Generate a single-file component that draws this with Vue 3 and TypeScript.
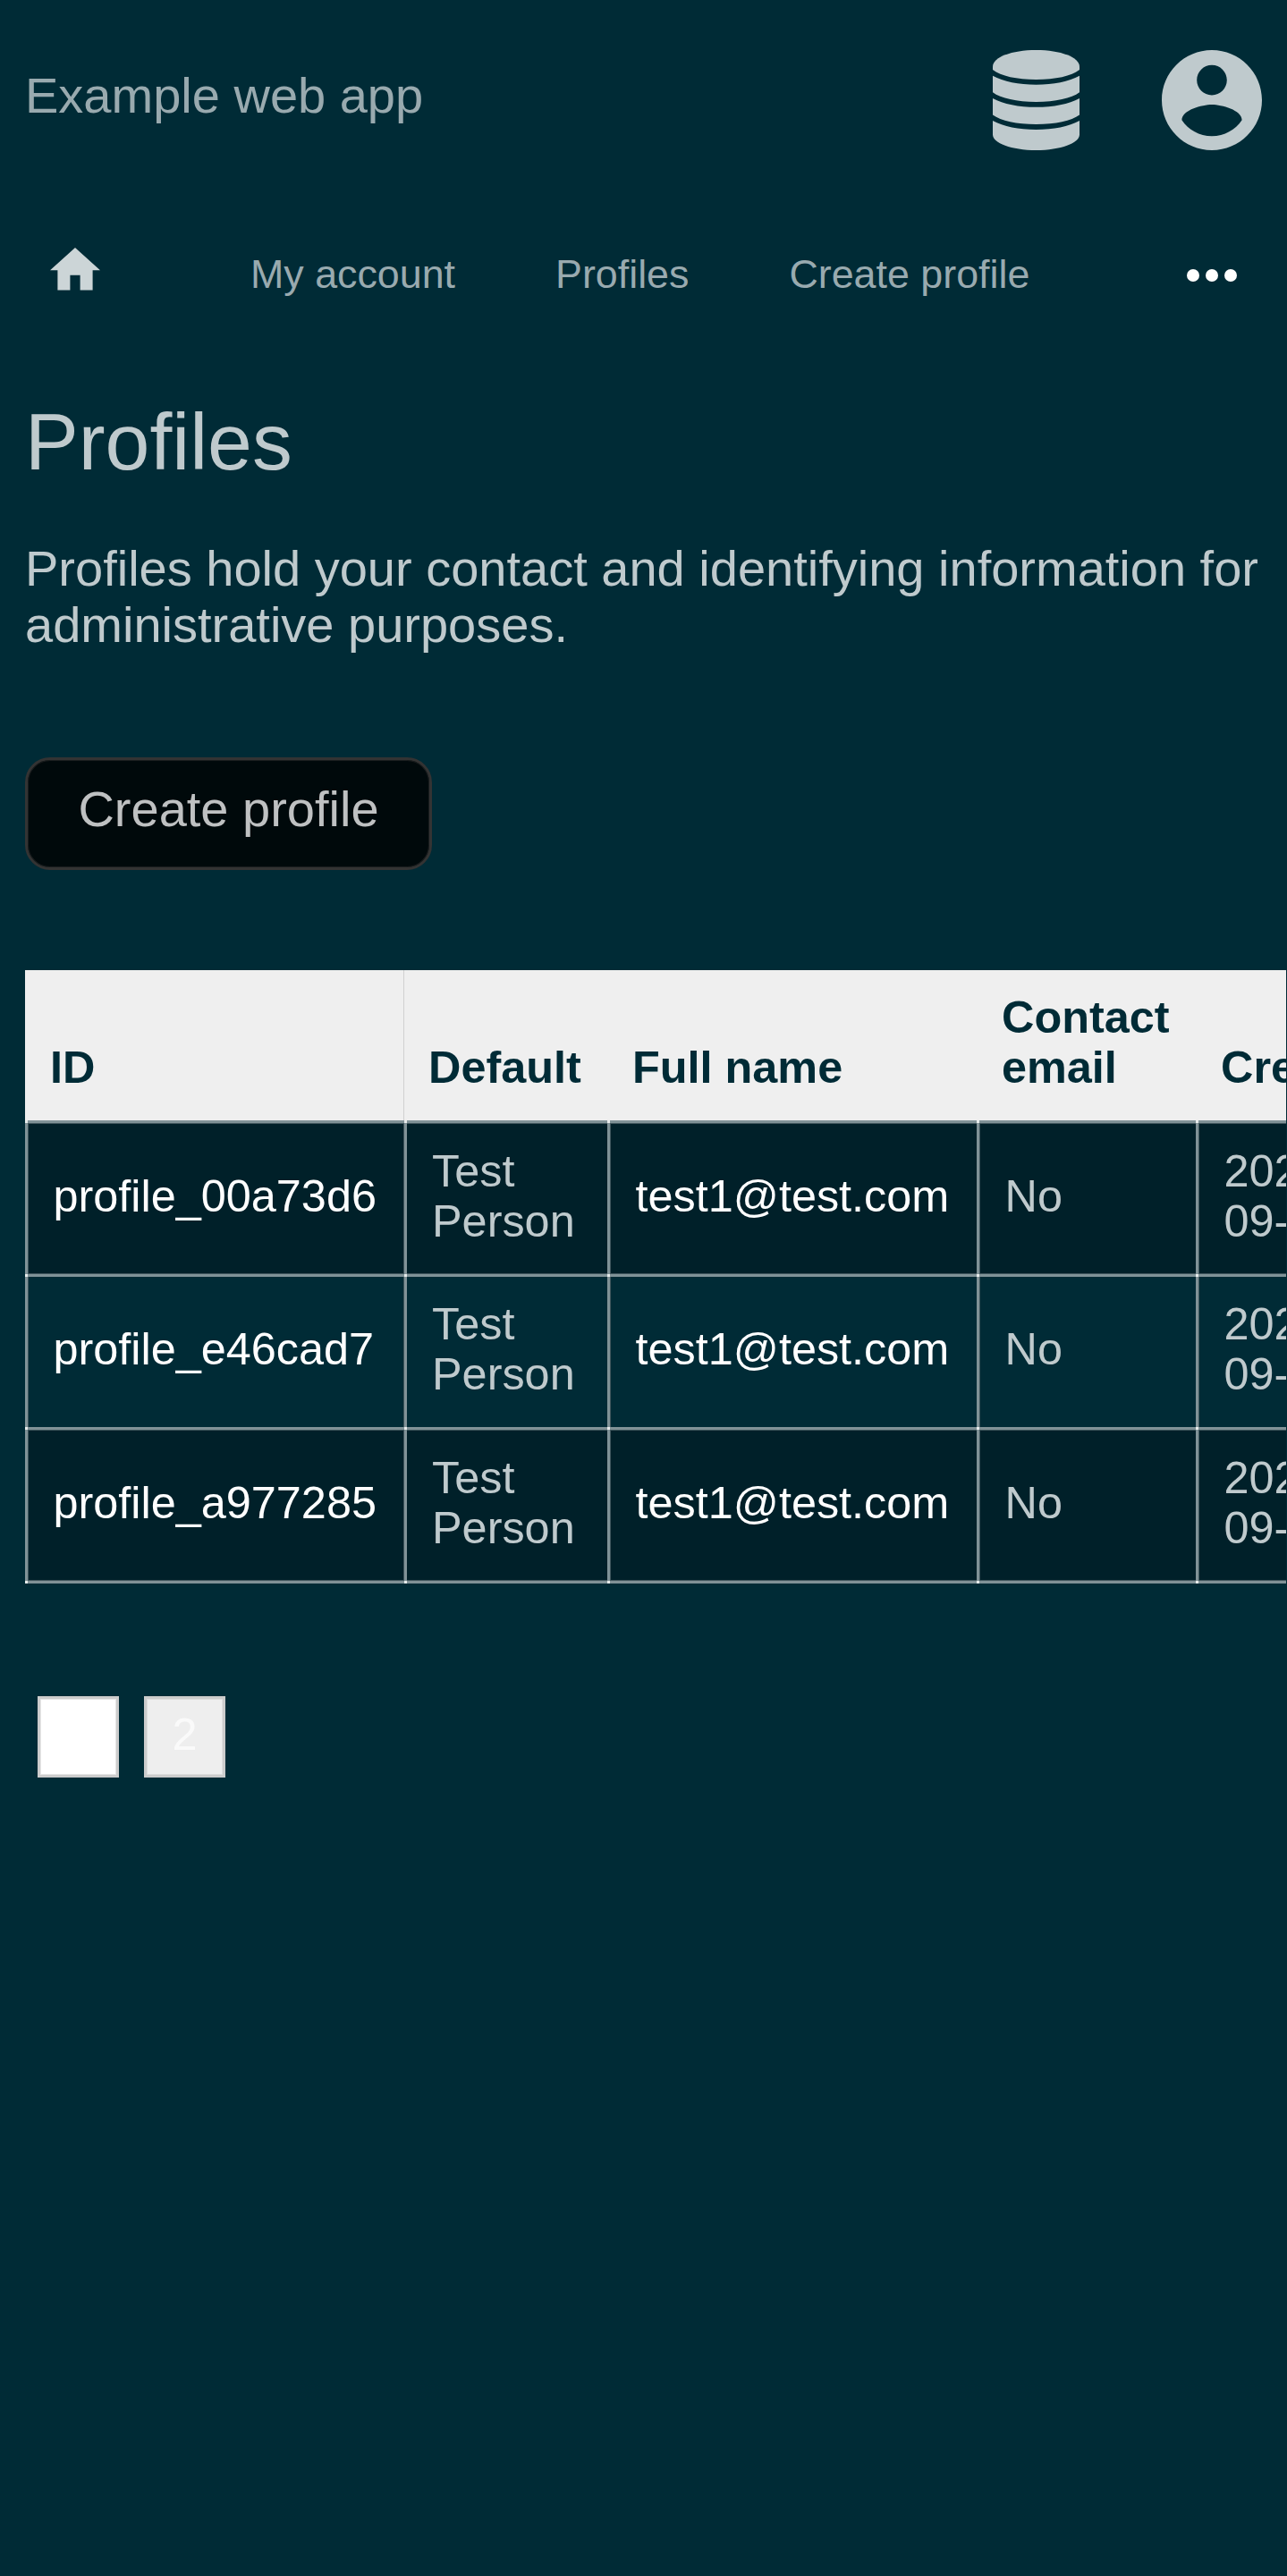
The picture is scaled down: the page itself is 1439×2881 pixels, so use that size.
<script setup lang="ts">
interface Profile {
  id: string
  person: string[]
  name: string
  contact: string
  created: string[]
}

const links: string[] = ['My account', 'Profiles', 'Create profile']

const profiles: Profile[] = [
  { id: 'profile_00a73d6', person: ['Test', 'Person'], name: 'test1@test.com', contact: 'No', created: ['2023-', '09-05'] },
  { id: 'profile_e46cad7', person: ['Test', 'Person'], name: 'test1@test.com', contact: 'No', created: ['2023-', '09-05'] },
  { id: 'profile_a977285', person: ['Test', 'Person'], name: 'test1@test.com', contact: 'No', created: ['2023-', '09-05'] },
]
</script>

<template>
  <div class="page">
    <header class="top">
      <a class="brand">Example web app</a>
      <div class="actions">
        <svg class="database" viewBox="0 0 97 112" width="97" height="112">
          <path d="M0 18.5C0 8 21 0 48.5 0S97 8 97 18.5V22C88 29 70 33 48.5 33S9 29 0 22Z" />
          <path d="M0 28.7C12 35.2 29 38.7 48.5 38.7S85 35.2 97 28.7V47.3C88 54 70 57.9 48.5 57.9S9 54 0 47.3Z" />
          <path d="M0 54C12 60.5 29 63.8 48.5 63.8S85 60.5 97 54V72.5C88 79 70 83 48.5 83S9 79 0 72.5Z" />
          <path d="M0 79C12 85.5 29 88.9 48.5 88.9S85 85.5 97 79V94.5C97 104 76 112 48.5 112S0 104 0 94.5Z" />
        </svg>
        <svg class="account" viewBox="2 2 20 20" width="112" height="112">
          <path
            fill-rule="evenodd"
            d="M12 2C6.48 2 2 6.48 2 12s4.48 10 10 10 10-4.48 10-10S17.52 2 12 2zm0 3c1.66 0 3 1.34 3 3s-1.34 3-3 3-3-1.34-3-3 1.34-3 3-3zm0 14.2c-2.5 0-4.71-1.28-6-3.22.03-1.99 4-3.08 6-3.08 1.99 0 5.97 1.09 6 3.08-1.29 1.94-3.5 3.22-6 3.22z"
          />
        </svg>
      </div>
    </header>

    <nav class="nav">
      <svg class="home" viewBox="2 3 20 17" width="56" height="47.6">
        <path d="M10 20v-6h4v6h5v-8h3L12 3 2 12h3v8z" />
      </svg>
      <div class="links">
        <a v-for="link in links" :key="link" class="link">{{ link }}</a>
      </div>
      <svg class="more" viewBox="0 0 56 14" width="56" height="14">
        <circle cx="7" cy="7" r="7" />
        <circle cx="28" cy="7" r="7" />
        <circle cx="49" cy="7" r="7" />
      </svg>
    </nav>

    <main class="main">
      <h1>Profiles</h1>
      <p>Profiles hold your contact and identifying information for administrative purposes.</p>
      <button class="create" type="button">Create profile</button>

      <div class="table">
        <div class="row head">
          <div class="th">ID</div>
          <div class="th divided">Default</div>
          <div class="th">Full name</div>
          <div class="th">Contact<br />email</div>
          <div class="th">Created</div>
        </div>
        <div v-for="profile in profiles" :key="profile.id" class="row body">
          <div class="td strong">{{ profile.id }}</div>
          <div class="td"><span v-for="line in profile.person" :key="line">{{ line }}</span></div>
          <div class="td strong">{{ profile.name }}</div>
          <div class="td">{{ profile.contact }}</div>
          <div class="td"><span v-for="line in profile.created" :key="line">{{ line }}</span></div>
        </div>
        <div class="row body end">
          <div v-for="n in 5" :key="n" class="td"></div>
        </div>
      </div>

      <div class="pages">
        <a class="pager current">1</a>
        <a class="pager">2</a>
      </div>
    </main>
  </div>
</template>

<style>
html,
body {
  background: #002b36;
}
</style>

<style scoped>
.page {
  width: 1439px;
  height: 2881px;
  overflow: hidden;
  background: #002b36;
  color: #bfcacd;
  font-family: 'Liberation Sans', Arial, sans-serif;
  font-size: 56px;
  line-height: 63px;
}

svg {
  display: block;
  flex: none;
  fill: #bfcacd;
}

.top {
  display: flex;
  justify-content: space-between;
  box-sizing: border-box;
  height: 224px;
  padding: 56px 28px 0;
}

.brand {
  margin-top: 19px;
  color: #99aaaf;
}

.actions {
  display: flex;
  gap: 92px;
}

.nav {
  display: flex;
  align-items: flex-start;
  box-sizing: border-box;
  height: 164px;
  padding: 53px 56px 0 56px;
}

.home {
  fill: #ccd5d7;
}

.links {
  display: flex;
  flex: 1;
  gap: 112px;
  margin-left: 168px;
  font-size: 44.8px;
  line-height: 59px;
  color: #99aaaf;
}

.more {
  margin-top: 24px;
  fill: #fff;
}

.main {
  padding: 55px 0 0 28px;
}

h1 {
  margin: 0;
  font-size: 89.6px;
  font-weight: 400;
  line-height: 102px;
}

p {
  margin: 59px 28px 0 0;
}

.create {
  display: block;
  box-sizing: border-box;
  width: 455px;
  height: 126px;
  margin: 117px 0 0;
  padding: 0 0 11px;
  border: 3px solid #333;
  border-radius: 28px;
  background: #00090b;
  box-shadow: inset 0 0 0 1px #1a1e1f;
  color: #bfc1c2;
  font: inherit;
}

.table {
  width: 1410px;
  margin-top: 112px;
  overflow: hidden;
  font-size: 50.4px;
  line-height: 56px;
}

.row {
  display: grid;
  grid-template-columns: 423px 228px 413px 245px 101px;
}

.head {
  height: 168px;
  background: #efefef;
  color: #002b36;
  font-weight: 700;
}

.th {
  display: flex;
  align-items: flex-end;
  padding: 25px 0 31px 28px;
}

.divided {
  padding-left: 27px;
  border-left: 1px solid #d0d0d0;
}

.body {
  --solid-y: 0px;
  --soft-y: 3px;
  height: 171px;
}

.body:nth-child(3) {
  --solid-y: 1px;
  --soft-y: 0px;
  height: 172px;
}

.body.end {
  --solid-y: 1px;
  --soft-y: 0px;
  height: 4px;
}

.body:nth-child(even):not(.end) {
  background: #002029;
}

/* Hairlines are three solid pixels plus one soft pixel, with a bright joint where they cross. */
.td {
  --solid-x: 0px;
  --soft-x: 3px;
  display: flex;
  flex-direction: column;
  justify-content: center;
  overflow: hidden;
  padding: 0 0 2px 31.5px;
  background-image:
    linear-gradient(#e6ebeb, #e6ebeb),
    linear-gradient(#809297, #809297),
    linear-gradient(#809297, #809297),
    linear-gradient(#40565d, #40565d),
    linear-gradient(#40565d, #40565d);
  background-position:
    var(--solid-x) var(--solid-y),
    var(--solid-x) 0,
    0 var(--solid-y),
    var(--soft-x) 0,
    0 var(--soft-y);
  background-size:
    3px 3px,
    3px 100%,
    100% 3px,
    1px 100%,
    100% 1px;
  background-repeat: no-repeat;
  white-space: nowrap;
}

.td:nth-child(2) {
  --solid-x: 1px;
  --soft-x: 0px;
  padding-left: 32px;
}

.end .td {
  padding: 0;
}

.strong {
  color: #fff;
}

.pages {
  display: flex;
  gap: 28px;
  margin: 126px 0 0 14px;
}

.pager {
  box-sizing: border-box;
  width: 91px;
  height: 91px;
  border: 3px solid #ccc;
  box-shadow: inset 0 0 0 1px #ddd;
  background: #eee;
  color: #fafafa;
  font-size: 50.4px;
  line-height: 79px;
  text-align: center;
}

.current {
  background: #fff;
  color: #fff;
  box-shadow: inset 0 0 0 1px #e6e6e6;
}
</style>
